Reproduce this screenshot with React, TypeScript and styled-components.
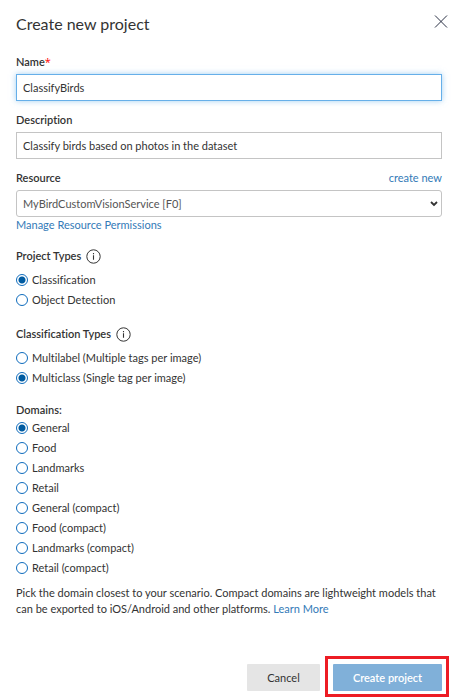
import React, { useState } from "react";
import styled, { createGlobalStyle } from "styled-components";

const GlobalStyle = createGlobalStyle`
  *, *::before, *::after { box-sizing: border-box; }
  body {
    margin: 0;
    background: #fff;
    color: #333;
    font: 11px/16px Lato, "Open Sans", sans-serif;
    font-variant-ligatures: none;
  }
  input, select, button { font: inherit; color: inherit; font-variant-ligatures: none; }
`;

const Dialog = styled.form`
  display: flex;
  flex-direction: column;
  min-height: 100vh;
  padding: 12px 14px 9px 16px;
`;

const Header = styled.header`
  display: flex;
  justify-content: space-between;
  align-items: flex-start;
  margin: 0 -6px 18px 0;
`;

const Title = styled.h1`
  margin: 0;
  font-size: 16px;
  font-weight: 400;
  line-height: 24px;
`;

const CloseButton = styled.button`
  display: flex;
  padding: 3px 0;
  border: 0;
  background: none;
  cursor: pointer;
`;

const Field = styled.div`
  display: flex;
  flex-direction: column;
  gap: 4px;
  margin-bottom: 11px;
`;

const FieldTop = styled.div`
  display: flex;
  justify-content: space-between;
`;

const Label = styled.label`
  font-weight: 600;
`;

const Required = styled.span`
  color: #f00;
  font-family: "Open Sans", sans-serif;
  font-weight: 400;
  line-height: 1;
`;

const TextInput = styled.input<{ $active?: boolean }>`
  width: 100%;
  height: 27px;
  padding: 0 6px;
  border: 1px solid ${(p) => (p.$active ? "#66afe9" : "#c4c4c4")};
  outline: 0;
  background: #fff;
  box-shadow: ${(p) => (p.$active ? "0 0 6px rgba(102, 175, 233, 0.6)" : "none")};
`;

const SelectBox = styled.div`
  display: grid;
  align-items: center;
  > * { grid-area: 1 / 1; }
  svg { justify-self: end; margin-right: 4px; pointer-events: none; }
`;

const Select = styled.select`
  appearance: none;
  width: 100%;
  height: 27px;
  padding: 0 20px 0 6px;
  border: 1px solid #c4c4c4;
  border-radius: 3px;
  background: #fff;
  color: #555;
`;

const Link = styled.a`
  color: #337ab7;
  text-decoration: none;
`;

const BelowField = styled.div`
  margin: -11px 0 13px;
`;

const Group = styled.fieldset`
  min-width: 0;
  margin: 0 0 14px;
  padding: 0;
  border: 0;
`;

const Legend = styled.legend<{ $compact?: boolean }>`
  display: flex;
  align-items: center;
  gap: 5px;
  padding: 0 0 ${(p) => (p.$compact ? 0 : 4)}px;
  font-weight: 600;
  line-height: ${(p) => (p.$compact ? 16 : 20)}px;
`;

const InfoButton = styled.button`
  display: flex;
  padding: 0;
  border: 0;
  background: none;
`;

const Option = styled.label`
  display: flex;
  align-items: center;
  gap: 4px;
  height: 20px;
`;

const Radio = styled.input`
  appearance: none;
  width: 12px;
  height: 12px;
  margin: 0;
  border: 1px solid #0f6cbd;
  border-radius: 50%;
  background: #fff;
  &:checked { background: radial-gradient(circle, #005ba1 0 3px, #fff 4px); }
`;

const Hint = styled.p`
  margin: -7px 0 0;
`;

const Footer = styled.footer`
  display: flex;
  justify-content: flex-end;
  gap: 13px;
  margin-top: auto;
`;

const Button = styled.button<{ $primary?: boolean }>`
  min-width: ${(p) => (p.$primary ? 109 : 73)}px;
  height: 27px;
  padding: 0 12px;
  border: 0;
  border-radius: 1px;
  background: ${(p) => (p.$primary ? "#80b0d9" : "#e5e5e5")};
  color: ${(p) => (p.$primary ? "#fff" : "#333")};
  font-weight: ${(p) => (p.$primary ? 600 : 400)};
`;

const Highlight = styled.div`
  position: relative;
  &::after {
    content: "";
    position: absolute;
    inset: -8px -7px -6px -8px;
    border: 3px solid #ed1c24;
    pointer-events: none;
  }
`;

const CloseIcon = () => (
  <svg width="14" height="14" viewBox="0 0 14 14" fill="none" stroke="#2b3044" aria-hidden="true">
    <path d="M1 .5 13 12.5M13 .5 1 12.5" />
  </svg>
);

const Chevron = () => (
  <svg width="8" height="6" viewBox="0 0 8 6" fill="none" stroke="#333" strokeWidth="1.8" aria-hidden="true">
    <path d="M1 1 4 4 7 1" />
  </svg>
);

const InfoIcon = () => (
  <svg width="15" height="15" viewBox="0 0 15 15" fill="none" stroke="#333" aria-hidden="true">
    <circle cx="7.5" cy="7.5" r="6.7" strokeWidth="1" />
    <path d="M7.5 6.2V10.7M7.5 4V5.2" strokeWidth="1.1" />
  </svg>
);

interface RadioGroupProps {
  name: string;
  title: string;
  options: string[];
  initial: string;
  info?: boolean;
}

function RadioGroup({ name, title, options, initial, info }: RadioGroupProps) {
  const [value, setValue] = useState(initial);
  return (
    <Group>
      <Legend $compact={!info}>
        {title}
        {info && (
          <InfoButton type="button" aria-label={`About ${title}`}>
            <InfoIcon />
          </InfoButton>
        )}
      </Legend>
      {options.map((option) => (
        <Option key={option}>
          <Radio type="radio" name={name} checked={value === option} onChange={() => setValue(option)} />
          {option}
        </Option>
      ))}
    </Group>
  );
}

const domains = [
  "General",
  "Food",
  "Landmarks",
  "Retail",
  "General (compact)",
  "Food (compact)",
  "Landmarks (compact)",
  "Retail (compact)",
];

export default function App() {
  return (
    <>
      <GlobalStyle />
      <Dialog onSubmit={(e) => e.preventDefault()}>
        <Header>
          <Title>Create new project</Title>
          <CloseButton type="button" aria-label="Close">
            <CloseIcon />
          </CloseButton>
        </Header>
        <Field>
          <Label htmlFor="name">
            Name<Required>*</Required>
          </Label>
          <TextInput id="name" $active defaultValue="ClassifyBirds" />
        </Field>
        <Field>
          <Label htmlFor="description">Description</Label>
          <TextInput id="description" defaultValue="Classify birds based on photos in the dataset" />
        </Field>
        <Field>
          <FieldTop>
            <Label htmlFor="resource">Resource</Label>
            <Link href="#create">create new</Link>
          </FieldTop>
          <SelectBox>
            <Select id="resource">
              <option>MyBirdCustomVisionService [F0]</option>
            </Select>
            <Chevron />
          </SelectBox>
        </Field>
        <BelowField>
          <Link href="#permissions">Manage Resource Permissions</Link>
        </BelowField>
        <RadioGroup
          name="project"
          title="Project Types"
          options={["Classification", "Object Detection"]}
          initial="Classification"
          info
        />
        <RadioGroup
          name="classification"
          title="Classification Types"
          options={["Multilabel (Multiple tags per image)", "Multiclass (Single tag per image)"]}
          initial="Multiclass (Single tag per image)"
          info
        />
        <RadioGroup name="domain" title="Domains:" options={domains} initial="General" />
        <Hint>
          Pick the domain closest to your scenario. Compact domains are lightweight models that can be exported to
          iOS/Android and other platforms. <Link href="#learn">Learn More</Link>
        </Hint>
        <Footer>
          <Button type="button">Cancel</Button>
          <Highlight>
            <Button type="submit" $primary>
              Create project
            </Button>
          </Highlight>
        </Footer>
      </Dialog>
    </>
  );
}
